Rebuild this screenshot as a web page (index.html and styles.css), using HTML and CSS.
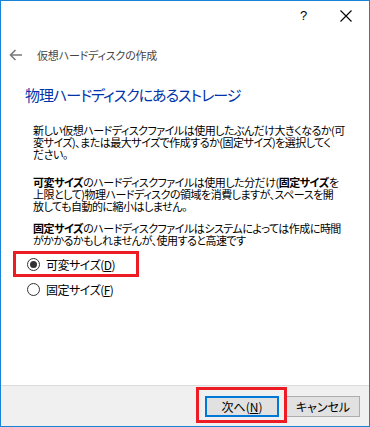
FILE: index.html
```html
<!DOCTYPE html>
<html lang="ja">
<head>
<meta charset="utf-8">
<link rel="stylesheet" href="styles.css">
</head>
<body>
<div class="window">
  <div class="titlebar">
    <div class="capbtn help">?</div>
    <div class="capbtn close">
      <svg width="12" height="12" viewBox="0 0 12 12"><path d="M0.5 0.5 L11.5 11.5 M11.5 0.5 L0.5 11.5" stroke="#000" stroke-width="1.1" fill="none"/></svg>
    </div>
  </div>
  <div class="navrow">
    <svg class="back" width="14" height="12" viewBox="0 0 14 12"><path d="M13 6 H1.5 M6.5 1 L1.5 6 L6.5 11" stroke="#7a7a7a" stroke-width="1.6" fill="none"/></svg>
    <span class="navtitle">仮想ハードディスクの作成</span>
  </div>
  <div class="content">
    <h1 class="heading">物理ハードディスクにあるストレージ</h1>
    <p class="para p1">新しい仮想ハードディスクファイルは使用したぶんだけ大きくなるか(可<br>変サイズ)、または最大サイズで作成するか(固定サイズ)を選択してく<br>ださい。</p>
    <p class="para p2"><b>可変サイズ</b>のハードディスクファイルは使用した分だけ(<b>固定サイズ</b>を<br>上限として)物理ハードディスクの領域を消費しますが、スペースを開<br>放しても自動的に縮小はしません。</p>
    <p class="para p3"><b>固定サイズ</b>のハードディスクファイルはシステムによっては作成に時間<br>がかかるかもしれませんが、使用すると高速です</p>
    <div class="options">
      <div class="highlight">
        <div class="radio"><span class="circle checked"></span><span class="rlabel">可変サイズ(<u>D</u>)</span></div>
      </div>
      <div class="radio second"><span class="circle"></span><span class="rlabel">固定サイズ(<u>F</u>)</span></div>
    </div>
  </div>
  <div class="footer">
    <span class="btnwrap">
      <span class="btn primary">次へ(<u>N</u>)</span>
      <span class="mark"></span>
    </span>
    <span class="btn">キャンセル</span>
  </div>
</div>
</body>
</html>
```

FILE: styles.css
```css
html, body {
  margin: 0;
  padding: 0;
  background: #fff;
}
.window {
  width: 370px;
  height: 427px;
  box-sizing: border-box;
  border: 1px solid #1883d7;
  display: flex;
  flex-direction: column;
  background: #fff;
  font-family: "Noto Sans CJK JP", sans-serif;
  font-feature-settings: "palt";
  color: #000;
  overflow: hidden;
}
.titlebar {
  height: 29px;
  display: flex;
  justify-content: flex-end;
  align-items: center;
  flex: none;
}
.capbtn {
  width: 45px;
  height: 29px;
  display: flex;
  align-items: center;
  justify-content: center;
}
.help {
  font-family: "Liberation Sans", sans-serif;
  font-size: 13px;
  padding-left: 4px;
  box-sizing: border-box;
}
.close {
  width: 45px;
  padding-right: 2px;
  box-sizing: border-box;
}
.navrow {
  height: 50px;
  display: flex;
  align-items: center;
  padding-left: 8px;
  flex: none;
}
.back {
  display: block;
}
.navtitle {
  margin-left: 14px;
  font-size: 11px;
  letter-spacing: -0.2px;
  color: #444;
}
.content {
  flex: 1;
  padding-left: 24px;
}
.heading {
  margin: 4px 0 0 0;
  font-size: 15px;
  letter-spacing: -1px;
  font-weight: normal;
  color: #0033aa;
  line-height: 22px;
}
.para {
  margin: 0;
  padding-left: 8px;
  font-size: 11px;
  line-height: 12px;
  white-space: nowrap;
  letter-spacing: -0.5px;
}
.para b {
  font-weight: bold;
}
.p1 { margin-top: 18px; }
.p2 { margin-top: 16px; }
.p3 { margin-top: 10px; }
.options {
  margin-top: 5px;
  margin-left: -12px;
}
.highlight {
  width: 126px;
  height: 26px;
  box-sizing: border-box;
  border: 3px solid #ed1c24;
  display: flex;
  align-items: center;
}
.radio {
  display: flex;
  align-items: center;
  padding-left: 11px;
  height: 20px;
}
.radio.second {
  padding-left: 14px;
  margin-top: 2px;
}
.circle {
  width: 13px;
  height: 13px;
  box-sizing: border-box;
  border: 1px solid #333;
  border-radius: 50%;
  display: flex;
  align-items: center;
  justify-content: center;
}
.circle.checked::after {
  content: "";
  width: 7px;
  height: 7px;
  border-radius: 50%;
  background: #333;
}
.rlabel {
  margin-left: 6px;
  font-size: 12px;
  letter-spacing: -0.5px;
}
.footer {
  flex: none;
  height: 40px;
  border-top: 1px solid #dcdcdc;
  background: #f0f0f0;
  display: flex;
  align-items: center;
  justify-content: flex-end;
  padding-right: 9px;
  gap: 7px;
}
.btnwrap {
  position: relative;
  display: block;
}
.btn {
  width: 74px;
  height: 21px;
  box-sizing: border-box;
  border: 1px solid #adadad;
  background: #e1e1e1;
  display: flex;
  align-items: center;
  justify-content: center;
  font-size: 12px;
}
.btn.primary {
  border: 2px solid #0078d7;
}
.mark {
  position: absolute;
  left: -9px;
  top: -9px;
  right: -8px;
  bottom: -6px;
  border: 3px solid #ed1c24;
}
```
